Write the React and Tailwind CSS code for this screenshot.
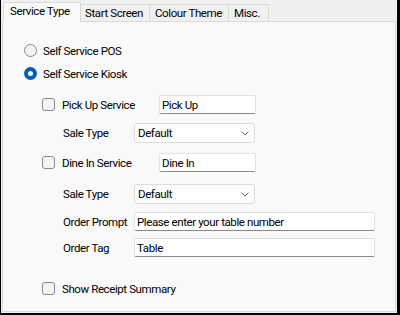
import React from "react";

const font = { fontFamily: "Roboto, 'Liberation Sans', sans-serif" };

function Radio({ checked, label }) {
  return (
    <div className="flex items-center h-[17px] ml-[21px]">
      {checked ? (
        <div className="w-[13px] h-[13px] rounded-full bg-[#005fb8] flex items-center justify-center">
          <div className="w-[5px] h-[5px] rounded-full bg-white" />
        </div>
      ) : (
        <div className="w-[13px] h-[13px] rounded-full border border-[#8a8a8a] bg-[#f3f3f3]" />
      )}
      <span className="ml-[6px] leading-[16px] whitespace-nowrap">{label}</span>
    </div>
  );
}

function Check({ label }) {
  return (
    <div className="flex items-center">
      <div className="w-[13px] h-[13px] rounded-[3px] border border-[#8a8a8a] bg-[#f5f5f5]" />
      <span className="ml-[7px] leading-[16px] whitespace-nowrap">{label}</span>
    </div>
  );
}

function TextBox({ value, w }) {
  return (
    <div
      className={`${w} h-[19px] bg-white border border-[#e2e2e2] border-b-[#8a8a8a] rounded-[2px] flex items-center pl-[2px] leading-[16px] whitespace-nowrap`}
    >
      {value}
    </div>
  );
}

function Select({ value }) {
  return (
    <div className="w-[121px] h-[20px] bg-[#fdfdfd] border border-[#dcdcdc] rounded-[3px] flex items-center justify-between pl-[3px] pr-[4px] leading-[16px]">
      <span>{value}</span>
      <svg width="8" height="5" viewBox="0 0 8 5" className="mr-px">
        <path d="M0.5 0.5 L4 4 L7.5 0.5" fill="none" stroke="#5f5f5f" strokeWidth="0.9" />
      </svg>
    </div>
  );
}

function LabeledRow({ label, children, className }) {
  return (
    <div className={`flex items-center ml-[60px] ${className}`}>
      <span className="w-[71px] shrink-0 leading-[16px] whitespace-nowrap">{label}</span>
      {children}
    </div>
  );
}

export default function App() {
  return (
    <div
      className="w-[400px] h-[315px] bg-[#f0f0f0] border-l border-r-[3px] border-b-2 border-black flex flex-col px-px pb-px text-[11.5px] tracking-[-0.4px] text-black"
      style={font}
    >
      <div className="h-[21px] flex items-end shrink-0 whitespace-nowrap">
        <div className="relative z-10 -mb-px ml-px w-[78px] h-[20px] bg-[#f9f9f9] border border-b-0 border-[#dadada] pl-[6px] leading-[16px]">
          Service Type
        </div>
        <div className="w-[69px] h-[17px] bg-[#f0f0f0] border-t border-r border-[#dadada] pl-[4px] leading-[16px]">
          Start Screen
        </div>
        <div className="w-[79px] h-[17px] bg-[#f0f0f0] border-t border-r border-[#dadada] pl-[5px] leading-[16px]">
          Colour Theme
        </div>
        <div className="w-[40px] h-[17px] bg-[#f0f0f0] border-t border-r border-[#dadada] pl-[5px] leading-[16px]">
          Misc.
        </div>
      </div>
      <div className="flex-1 bg-[#f9f9f9] border border-[#dadada] flex flex-col">
        <div className="mt-[20px]">
          <Radio label="Self Service POS" />
        </div>
        <div className="mt-[6px]">
          <Radio checked label="Self Service Kiosk" />
        </div>
        <div className="mt-[13px] flex items-center ml-[39px] h-[19px]">
          <div className="w-[117px] shrink-0">
            <Check label="Pick Up Service" />
          </div>
          <TextBox value="Pick Up" w="w-[97px]" />
        </div>
        <LabeledRow label="Sale Type" className="mt-[9px]">
          <Select value="Default" />
        </LabeledRow>
        <div className="mt-[10px] flex items-center ml-[39px] h-[19px]">
          <div className="w-[117px] shrink-0">
            <Check label="Dine In Service" />
          </div>
          <TextBox value="Dine In" w="w-[97px]" />
        </div>
        <LabeledRow label="Sale Type" className="mt-[12px]">
          <Select value="Default" />
        </LabeledRow>
        <LabeledRow label="Order Prompt" className="mt-[8px]">
          <TextBox value="Please enter your table number" w="w-[241px]" />
        </LabeledRow>
        <LabeledRow label="Order Tag" className="mt-[7px]">
          <TextBox value="Table" w="w-[241px]" />
        </LabeledRow>
        <div className="mt-[23px] ml-[39px] h-[17px] flex items-center">
          <Check label="Show Receipt Summary" />
        </div>
      </div>
    </div>
  );
}
